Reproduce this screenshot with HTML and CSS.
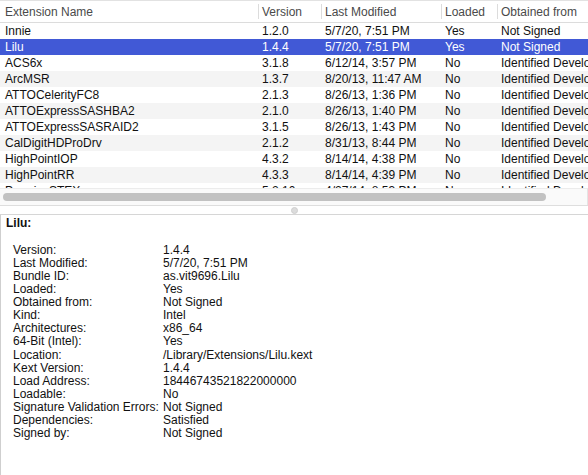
FILE: index.html
```html
<!DOCTYPE html>
<html lang="en">
<head>
    <meta charset="UTF-8">
    <title>Extensions</title>
    <link rel="stylesheet" href="styles.css">
</head>
<body>
    <div class="list">
        <table class="ext-table">
            <colgroup>
                <col class="c-name">
                <col class="c-ver">
                <col class="c-mod">
                <col class="c-load">
                <col class="c-from">
            </colgroup>
            <thead>
                <tr>
                    <th>Extension Name</th>
                    <th>Version</th>
                    <th>Last Modified</th>
                    <th>Loaded</th>
                    <th>Obtained from</th>
                </tr>
            </thead>
        </table>
        <div class="list-body">
            <table class="ext-table">
                <colgroup>
                    <col class="c-name">
                    <col class="c-ver">
                    <col class="c-mod">
                    <col class="c-load">
                    <col class="c-from">
                </colgroup>
                <tbody>
                    <tr><td>Innie</td><td>1.2.0</td><td>5/7/20, 7:51 PM</td><td>Yes</td><td>Not Signed</td></tr>
                    <tr class="selected"><td>Lilu</td><td>1.4.4</td><td>5/7/20, 7:51 PM</td><td>Yes</td><td>Not Signed</td></tr>
                    <tr><td>ACS6x</td><td>3.1.8</td><td>6/12/14, 3:57 PM</td><td>No</td><td>Identified Developer</td></tr>
                    <tr><td>ArcMSR</td><td>1.3.7</td><td>8/20/13, 11:47 AM</td><td>No</td><td>Identified Developer</td></tr>
                    <tr><td>ATTOCelerityFC8</td><td>2.1.3</td><td>8/26/13, 1:36 PM</td><td>No</td><td>Identified Developer</td></tr>
                    <tr><td>ATTOExpressSASHBA2</td><td>2.1.0</td><td>8/26/13, 1:40 PM</td><td>No</td><td>Identified Developer</td></tr>
                    <tr><td>ATTOExpressSASRAID2</td><td>3.1.5</td><td>8/26/13, 1:43 PM</td><td>No</td><td>Identified Developer</td></tr>
                    <tr><td>CalDigitHDProDrv</td><td>2.1.2</td><td>8/31/13, 8:44 PM</td><td>No</td><td>Identified Developer</td></tr>
                    <tr><td>HighPointIOP</td><td>4.3.2</td><td>8/14/14, 4:38 PM</td><td>No</td><td>Identified Developer</td></tr>
                    <tr><td>HighPointRR</td><td>4.3.3</td><td>8/14/14, 4:39 PM</td><td>No</td><td>Identified Developer</td></tr>
                    <tr><td>PromiseSTEX</td><td>5.2.10</td><td>4/27/14, 8:53 PM</td><td>No</td><td>Identified Developer</td></tr>
                </tbody>
            </table>
        </div>
        <div class="hscroll">
            <div class="thumb"></div>
        </div>
    </div>

    <div class="splitter"><span class="grip"></span></div>

    <div class="details">
        <h2>Lilu:</h2>
        <dl class="props">
            <dt>Version:</dt><dd>1.4.4</dd>
            <dt>Last Modified:</dt><dd>5/7/20, 7:51 PM</dd>
            <dt>Bundle ID:</dt><dd>as.vit9696.Lilu</dd>
            <dt>Loaded:</dt><dd>Yes</dd>
            <dt>Obtained from:</dt><dd>Not Signed</dd>
            <dt>Kind:</dt><dd>Intel</dd>
            <dt>Architectures:</dt><dd>x86_64</dd>
            <dt>64-Bit (Intel):</dt><dd>Yes</dd>
            <dt>Location:</dt><dd>/Library/Extensions/Lilu.kext</dd>
            <dt>Kext Version:</dt><dd>1.4.4</dd>
            <dt>Load Address:</dt><dd>18446743521822000000</dd>
            <dt>Loadable:</dt><dd>No</dd>
            <dt>Signature Validation Errors:</dt><dd>Not Signed</dd>
            <dt>Dependencies:</dt><dd>Satisfied</dd>
            <dt>Signed by:</dt><dd>Not Signed</dd>
        </dl>
    </div>
</body>
</html>
```

FILE: styles.css
```css
body {
    margin: 0;
    font-family: "Liberation Sans", Arial, sans-serif;
    font-size: 12px;
    color: #111;
    background: #fff;
    width: 588px;
    height: 475px;
    overflow: hidden;
}

.list {
    border-top: 1px solid #e2e2e2;
    overflow: hidden;
}

.ext-table {
    width: 700px;
    border-collapse: collapse;
    table-layout: fixed;
}

.c-name { width: 258px; }
.c-ver { width: 63px; }
.c-mod { width: 120px; }
.c-load { width: 56px; }
.c-from { width: 203px; }

th {
    height: 21px;
    padding: 0 4px;
    text-align: left;
    font-weight: normal;
    color: #4a4a4a;
    border-bottom: 1px solid #dcdcdc;
    white-space: nowrap;
    background: #fff;
}

th + th {
    background: linear-gradient(#dcdcdc, #dcdcdc) no-repeat left 3px / 1px 15px;
}

th:first-child {
    padding-left: 5px;
}

.list-body {
    height: 165px;
    overflow: hidden;
}

td {
    height: 16px;
    padding: 0 4px;
    white-space: nowrap;
    overflow: hidden;
    line-height: 16px;
}

td:first-child {
    padding-left: 5px;
}

tbody tr:nth-child(even) {
    background: #f4f4f4;
}

tbody tr.selected {
    background: #4159d6;
    color: #fff;
}

.hscroll {
    height: 17px;
    background: #fafafa;
    border-top: 1px solid #ececec;
    border-right: 1px solid #e4e4e4;
    box-sizing: border-box;
    padding: 4px 0 0 3px;
}

.thumb {
    width: 543px;
    height: 8px;
    border-radius: 4px;
    background: #c2c2c2;
}

.splitter {
    height: 8px;
    border-top: 1px solid #dedede;
    border-bottom: 1px solid #d6d6d6;
    display: flex;
    justify-content: center;
    align-items: center;
    background: #fff;
}

.grip {
    width: 5px;
    height: 5px;
    border-radius: 50%;
    background: #dcdcdc;
    border: 1px solid #cfcfcf;
}

.details {
    border-left: 1px solid #cfcfcf;
    height: 260px;
    padding: 1px 0 0 5px;
}

.details h2 {
    margin: 0;
    font-size: 12px;
    line-height: 14px;
    font-weight: bold;
}

.props {
    margin: 14px 0 0 7px;
    display: grid;
    grid-template-columns: 150px auto;
    line-height: 13.07px;
}

.props dt,
.props dd {
    margin: 0;
}
```
